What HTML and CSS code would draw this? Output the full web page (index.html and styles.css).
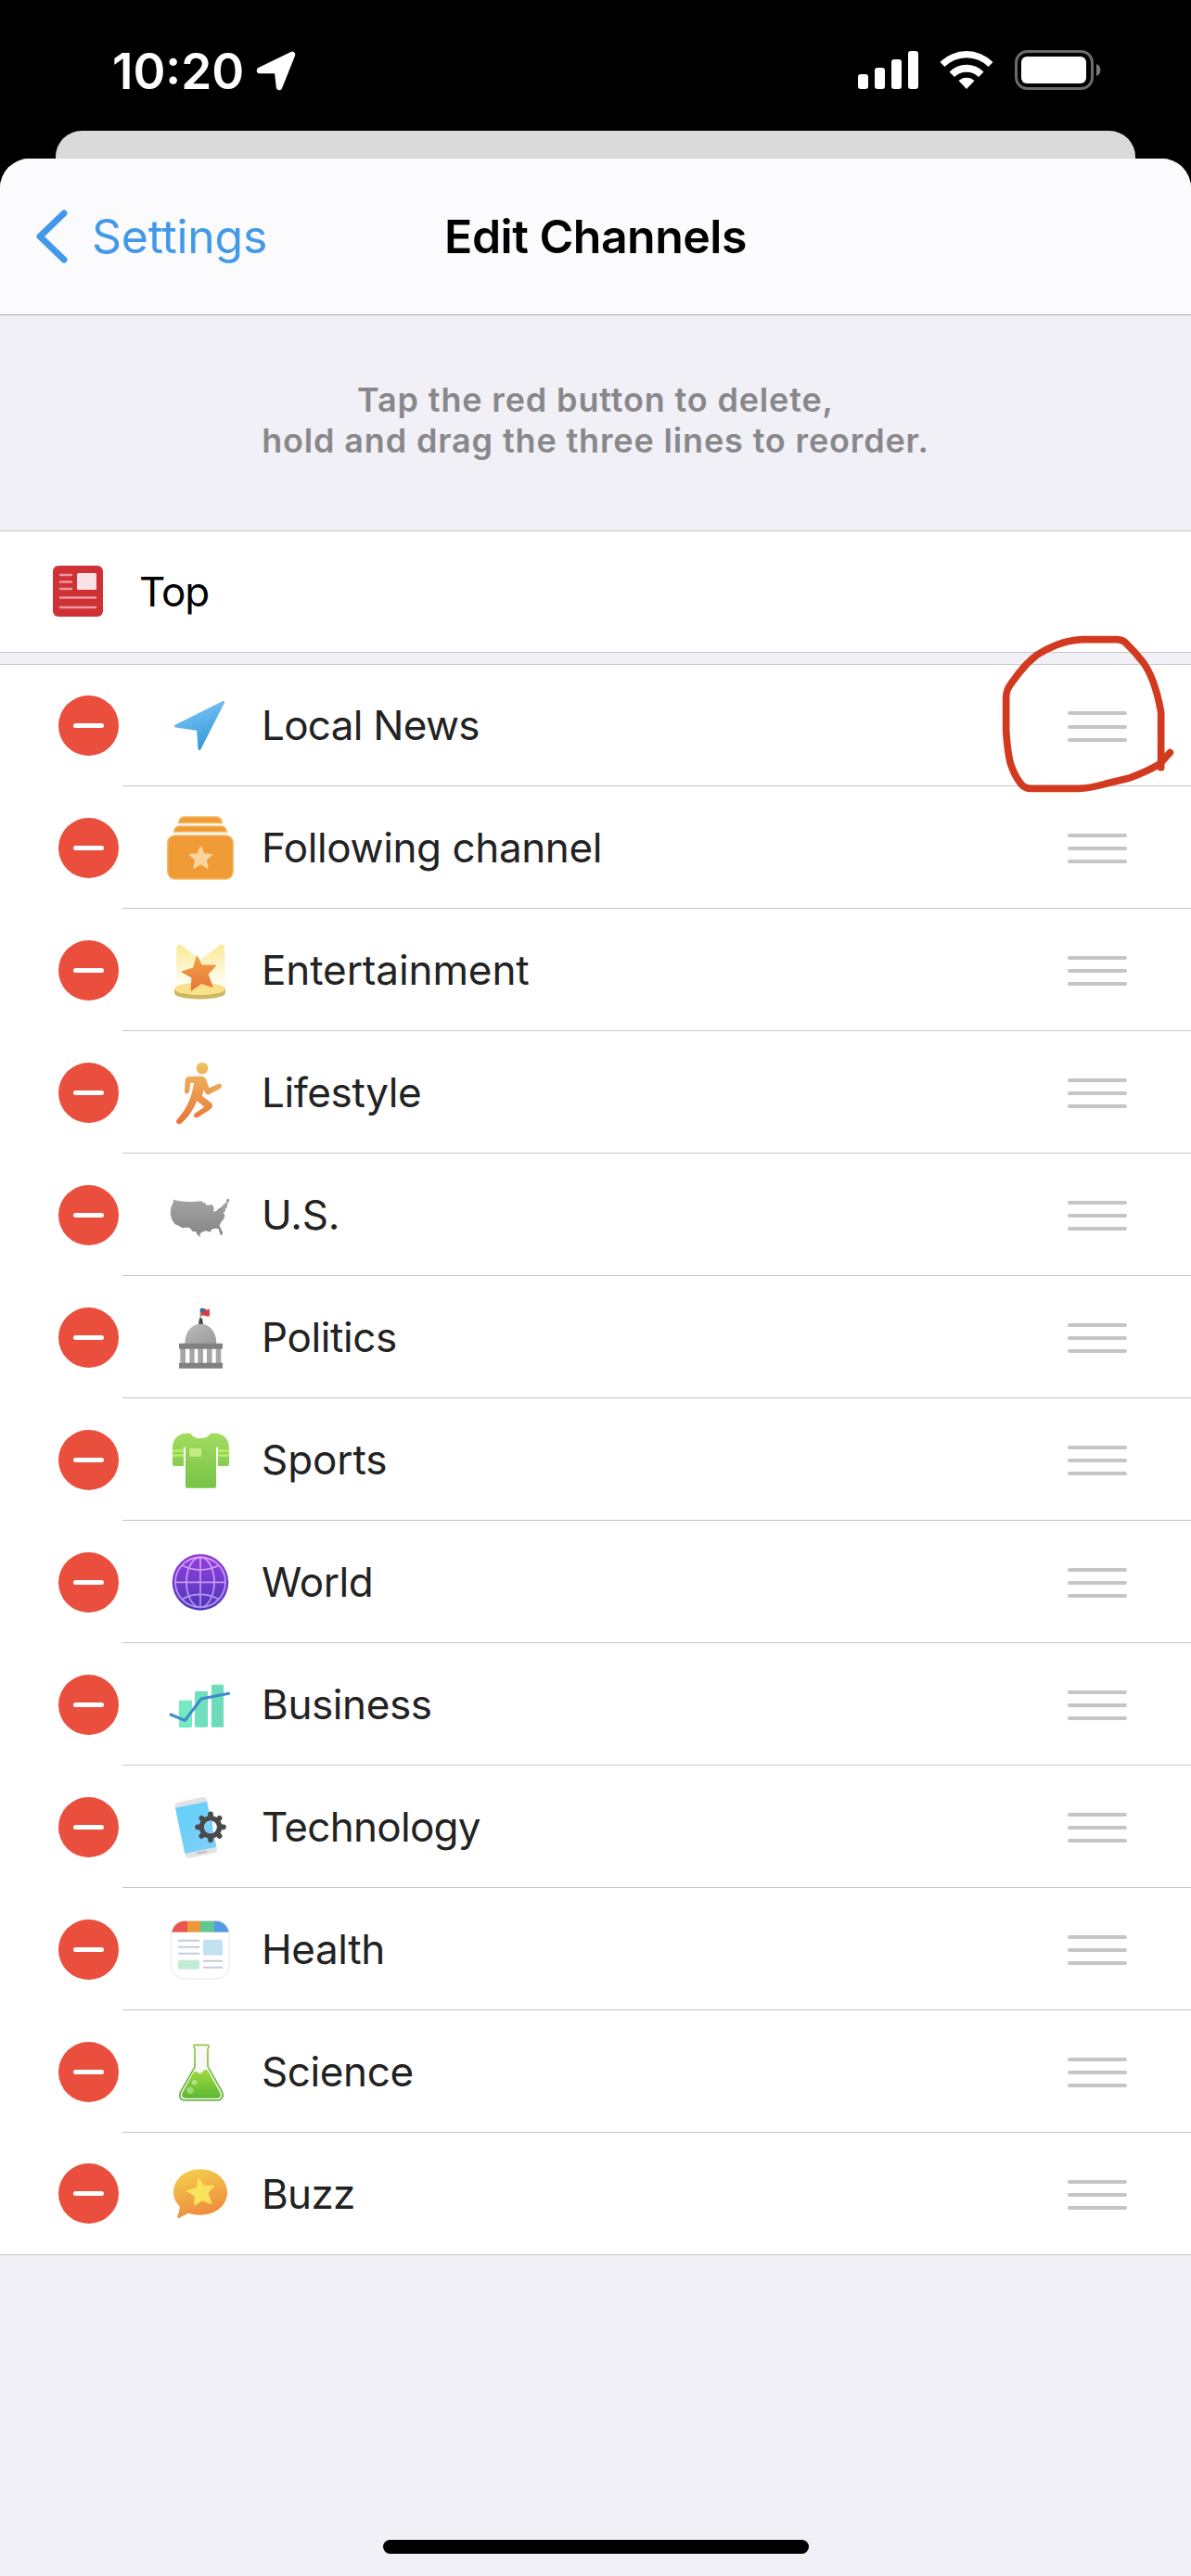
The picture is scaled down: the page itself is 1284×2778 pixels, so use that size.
FILE: index.html
```html
<!DOCTYPE html>
<html lang="en">

<head>
    <meta charset="UTF-8">
    <meta name="viewport" content="width=device-width, initial-scale=1.0">
    <title>Edit Channels</title>
    <link rel="stylesheet" href="styles.css">
</head>

<body>
    <div class="status-bar">
        <span class="time">10:20</span>
        <svg class="location" width="44" height="44" viewBox="0 0 44 44">
            <path d="M4 21 L39 4 L25 39 L23 21 Z" fill="#fff" stroke="#fff" stroke-width="6.500" stroke-linejoin="round" />
        </svg>
        <div class="status-icons">
            <svg width="65" height="42" viewBox="0 0 65 42" fill="#fff">
                <rect x="0" y="26" width="11" height="16" rx="3" />
                <rect x="18" y="19" width="11" height="23" rx="3" />
                <rect x="36" y="10" width="11" height="32" rx="3" />
                <rect x="54" y="1" width="11" height="41" rx="3" />
            </svg>
            <svg width="58" height="42" viewBox="0 0 58 42" fill="#fff">
                <path d="M0.500 13 A40 40 0 0 1 57.500 13 L52.500 18 A33 33 0 0 0 5.500 18 Z" />
                <path d="M10.500 23.500 A26 26 0 0 1 47.500 23.500 L42 29 A19 19 0 0 0 16 29 Z" />
                <path d="M20.500 33 A12.500 12.500 0 0 1 37.500 33 L29 42 Z" />
            </svg>
            <svg width="95" height="44" viewBox="0 0 95 44">
                <rect x="1.500" y="1.500" width="82" height="40" rx="12" fill="none" stroke="#6b6b6b" stroke-width="3" />
                <rect x="7" y="7" width="70" height="29" rx="6" fill="#fff" />
                <path d="M88 15 A7 7 0 0 1 88 28 Z" fill="#7a7a7a" />
            </svg>
        </div>
    </div>

    <div class="back-sheet"></div>

    <div class="sheet">
        <div class="navbar">
            <div class="back">
                <svg width="34" height="58" viewBox="0 0 34 58">
                    <path d="M30 4 L4 29 L30 54" fill="none" stroke="#4299e8" stroke-width="7" stroke-linecap="round" stroke-linejoin="round" />
                </svg>
                <span>Settings</span>
            </div>
            <div class="title">Edit Channels</div>
        </div>

        <div class="hint">
            <div>Tap the red button to delete,</div>
            <div>hold and drag the three lines to reorder.</div>
        </div>

        <div class="top-row">
            <svg class="top-icon" width="54" height="55" viewBox="0 0 54 55">
                <rect width="54" height="55" rx="6" fill="#d03134" />
                <rect x="26" y="8" width="21" height="18" rx="1.500" fill="#f7e2e5" />
                <g stroke="#eb9ba2" stroke-width="2.400" stroke-linecap="round">
                    <path d="M8 10 H20 M8 17.500 H20 M8 25 H20 M8 34.500 H46 M8 45 H46" />
                </g>
            </svg>
            <span>Top</span>
        </div>

        <div class="list">
            <div class="row">
                <div class="minus"></div>
                <div class="row-body">
                    <svg class="icon" viewBox="0 0 72 72">
                        <linearGradient id="local" x1="0" y1="0" x2="0.400" y2="1">
                            <stop offset="0" stop-color="#83cbfa" />
                            <stop offset="1" stop-color="#399bdb" />
                        </linearGradient>
                        <path d="M60.500 11.500 L9.500 37 L33.500 40.500 L35 61.500 Z" fill="url(#local)" stroke="url(#local)" stroke-width="3" stroke-linejoin="round" />
                    </svg>
                    <span class="name tight">Local News</span>
                    <div class="handle"><i></i><i></i><i></i></div>
                </div>
            </div>

            <div class="row">
                <div class="minus"></div>
                <div class="row-body">
                    <svg class="icon" viewBox="0 0 72 72">
                        <g fill="#f19b37" stroke="#f5b862" stroke-width="1.500">
                            <path d="M12.500 9.500 Q14 3 18 3 H54 Q58 3 59.500 9.500 Z" />
                            <path d="M7.500 19 Q9 13 13 13 H59 Q63 13 64.500 19 Z" />
                            <rect x="0.800" y="23" width="70.400" height="47" rx="8" />
                        </g>
                        <path d="M36.500 35 L39.800 43 L48.500 43.700 L41.900 49.300 L44 58 L36.500 53.300 L29 58 L31.100 49.300 L24.500 43.700 L33.200 43 Z" fill="#f9d59c" stroke="#f9d59c" stroke-width="1.500" stroke-linejoin="round" />
                    </svg>
                    <span class="name">Following channel</span>
                    <div class="handle"><i></i><i></i><i></i></div>
                </div>
            </div>

            <div class="row">
                <div class="minus"></div>
                <div class="row-body">
                    <svg class="icon" viewBox="90 148 216 216">
                        <linearGradient id="beam" x1="0" y1="0" x2="0" y2="1">
                            <stop offset="0" stop-color="#fae996" />
                            <stop offset="1" stop-color="#fffef4" />
                        </linearGradient>
                        <linearGradient id="star" x1="0" y1="0" x2="0" y2="1">
                            <stop offset="0" stop-color="#f0a045" />
                            <stop offset="1" stop-color="#e8783a" />
                        </linearGradient>
                        <path d="M121 182 Q124 170 136 175 L198 222 L262 175 Q274 170 276 182 L279 300 H118 Z" fill="url(#beam)" />
                        <path d="M114 318 V330 C114 357 279 357 279 330 V318 Z" fill="#cdb862" />
                        <ellipse cx="196.500" cy="317" rx="82.500" ry="20" fill="#fae28a" />
                        <path d="M187 213 L202 242 L246 242 L221 269 L236 310 L201 298 L169 321 L172 280 L140 262 L177 250 Z" fill="url(#star)" stroke="url(#star)" stroke-width="5" stroke-linejoin="round" />
                    </svg>
                    <span class="name loose">Entertainment</span>
                    <div class="handle"><i></i><i></i><i></i></div>
                </div>
            </div>

            <div class="row">
                <div class="minus"></div>
                <div class="row-body">
                    <svg class="icon" viewBox="90 544 216 216">
                        <linearGradient id="run" gradientUnits="userSpaceOnUse" x1="200" y1="555" x2="180" y2="755">
                            <stop offset="0" stop-color="#f0c062" />
                            <stop offset="1" stop-color="#e8743a" />
                        </linearGradient>
                        <circle cx="204" cy="574" r="19" fill="url(#run)" />
                        <path d="M155 602 Q180 598 205 600 Q214 602 217 610 L226 638 L255 625 Q267 622 268 632 Q266 639 258 642 L225 659 Q218 660 215 655 L209 644 L204 664 L233 686 Q240 692 236 700 L232 706 L190 733 Q180 737 177 729 Q176 722 183 718 L211 699 L187 680 C174 710 158 735 135 753 Q126 758 120 749 Q119 741 126 736 C150 710 170 672 177 622 L166 621 L162 650 Q158 659 150 656 Q147 655 147 648 L149 614 Q149 606 155 602 Z" fill="url(#run)" />
                    </svg>
                    <span class="name">Lifestyle</span>
                    <div class="handle"><i></i><i></i><i></i></div>
                </div>
            </div>

            <div class="row">
                <div class="minus"></div>
                <div class="row-body">
                    <svg class="icon" viewBox="90 160 216 216">
                        <linearGradient id="us" x1="0" y1="0" x2="0" y2="1">
                            <stop offset="0" stop-color="#a4a4a4" />
                            <stop offset="1" stop-color="#858585" />
                        </linearGradient>
                        <path d="M111 219 L122 222 Q160 229 202 224 L206 229 L216 229 L213 234 L222 237 L235 235 L240 240 L242 249 L240 258 L249 256 L258 247 L267 243 L275 232 L282 229 L282 218 L289 216 L293 223 L286 231 L284 244 L278 250 L279 256 L272 261 L277 268 L275 280 L265 292 L260 302 L264 313 L270 325 L268 335 L262 331 L257 314 L245 312 L234 316 L230 324 L215 320 L202 325 L196 330 L198 339 L190 335 L183 322 L174 323 L163 310 L152 309 L140 311 L123 301 L116 299 L106 284 L101 264 L103 244 L110 229 Z" fill="url(#us)" />
                    </svg>
                    <span class="name loose">U.S.</span>
                    <div class="handle"><i></i><i></i><i></i></div>
                </div>
            </div>

            <div class="row">
                <div class="minus"></div>
                <div class="row-body">
                    <svg class="icon" viewBox="90 556 216 216">
                        <linearGradient id="dome" x1="0" y1="0" x2="1" y2="1">
                            <stop offset="0" stop-color="#bcbcbc" />
                            <stop offset="1" stop-color="#9a9a9a" />
                        </linearGradient>
                        <rect x="197" y="572" width="3" height="34" fill="#777" />
                        <path d="M200 572 Q208 568 214 573 T228 573 V595 Q221 598 214 595 T200 595 Z" fill="#dc3b48" />
                        <path d="M198 572 Q205 568 211 572 V583 H198 Z" fill="#2f6fb0" />
                        <path d="M195 603 H204 L207 622 H192 Z" fill="#444" />
                        <path d="M148 685 C148 600 250 600 250 685 Z" fill="url(#dome)" />
                        <path d="M133 700 H150 V750 H133 Z M163 700 H179 V750 H163 Z M190 700 H207 V750 H190 Z M219 700 H236 V750 H219 Z M248 700 H265 V750 H248 Z" fill="#a6a6a6" />
                        <rect x="129" y="684" width="141" height="18" rx="2" fill="#808080" />
                        <rect x="129" y="747" width="141" height="18" rx="2" fill="#808080" />
                    </svg>
                    <span class="name">Politics</span>
                    <div class="handle"><i></i><i></i><i></i></div>
                </div>
            </div>

            <div class="row">
                <div class="minus"></div>
                <div class="row-body">
                    <svg class="icon" viewBox="90 172 216 216">
                        <linearGradient id="shirt" x1="0" y1="0" x2="0" y2="1">
                            <stop offset="0" stop-color="#a3dc60" />
                            <stop offset="1" stop-color="#75c446" />
                        </linearGradient>
                        <path d="M167 195 Q174 211 198 211 Q222 211 231 195 H245 C272 195 291 213 291 243 V295 Q291 300 286 301 H255 V242 Q252 237 249 242 V367 Q249 372 244 372 H155 Q150 372 150 367 V242 Q147 237 144 242 V301 H113 Q108 300 108 295 V243 C108 213 126 195 154 195 Z" fill="url(#shirt)" />
                        <path d="M108 248 H144 V255 H108 Z M108 263 H144 V270 H108 Z M255 248 H291 V255 H255 Z M255 263 H291 V270 H255 Z" fill="#b9ee6c" />
                        <rect x="163" y="243" width="38" height="27" rx="3" fill="#c5ec86" />
                    </svg>
                    <span class="name loose">Sports</span>
                    <div class="handle"><i></i><i></i><i></i></div>
                </div>
            </div>

            <div class="row">
                <div class="minus"></div>
                <div class="row-body">
                    <svg class="icon" viewBox="90 568 216 216">
                        <linearGradient id="globe" x1="0" y1="0" x2="0" y2="1">
                            <stop offset="0" stop-color="#963ee0" />
                            <stop offset="1" stop-color="#4839b8" />
                        </linearGradient>
                        <linearGradient id="grid" gradientUnits="userSpaceOnUse" x1="0" y1="590" x2="0" y2="764">
                            <stop offset="0" stop-color="#dda4f3" />
                            <stop offset="1" stop-color="#b38ff3" />
                        </linearGradient>
                        <circle cx="198" cy="677" r="91" fill="url(#globe)" />
                        <g fill="none" stroke="url(#grid)" stroke-width="5">
                            <circle cx="198" cy="677" r="81" />
                            <ellipse cx="198" cy="677" rx="45" ry="81" />
                            <path d="M198 596 L198.100 758 M117 677 L279 677.100 M138 622 Q198 652 258 622 M138 732 Q198 700 258 732" />
                        </g>
                    </svg>
                    <span class="name">World</span>
                    <div class="handle"><i></i><i></i><i></i></div>
                </div>
            </div>

            <div class="row">
                <div class="minus"></div>
                <div class="row-body">
                    <svg class="icon" viewBox="90 184 216 216">
                        <rect x="129" y="279" width="42" height="88" rx="4" fill="#75e8c4" />
                        <rect x="180" y="249" width="42" height="117" rx="4" fill="#70e0be" />
                        <rect x="234" y="228" width="39" height="138" rx="2" fill="#6cdcb9" />
                        <path d="M102 325 L148 344 L201 274 L290 257" fill="none" stroke="#3c8bc9" stroke-width="9" stroke-linecap="round" stroke-linejoin="round" />
                    </svg>
                    <span class="name">Business</span>
                    <div class="handle"><i></i><i></i><i></i></div>
                </div>
            </div>

            <div class="row">
                <div class="minus"></div>
                <div class="row-body">
                    <svg class="icon" viewBox="90 580 216 216">
                        <linearGradient id="phone" x1="0" y1="0" x2="1" y2="1">
                            <stop offset="0" stop-color="#61d0fc" />
                            <stop offset="1" stop-color="#82cff8" />
                        </linearGradient>
                        <path d="M117 627 L116 617 Q118 611 125 609 L208 591 Q216 592 219 600 L252 762 Q252 769 245 772 L162 789 Q151 789 149 780 Z" fill="#e2e2e2" />
                        <path d="M117 627 L219 606 L250 753 L148 775 Z" fill="url(#phone)" />
                        <path d="M190 773 L217 768" stroke="#bdbdbd" stroke-width="6" stroke-linecap="round" />
                        <!-- gear -->
                        <g stroke="#4a4a4a" stroke-width="17" stroke-linecap="round">
                            <path d="M231 647 V731 M189 689 H273 M202 660 L260 718 M260 660 L202 718" />
                        </g>
                        <circle cx="231" cy="689" r="37" fill="#4a4a4a" />
                        <circle cx="231" cy="689" r="20.500" fill="#fff" />
                        <path d="M236.500 669.500 A20.500 20.500 0 1 0 239.500 707.500 Z" fill="#7acff9" />
                    </svg>
                    <span class="name tight">Technology</span>
                    <div class="handle"><i></i><i></i><i></i></div>
                </div>
            </div>

            <div class="row">
                <div class="minus"></div>
                <div class="row-body">
                    <svg class="icon" viewBox="90 196 216 216">
                        <clipPath id="card">
                            <rect x="106" y="213" width="184" height="186" rx="42" />
                        </clipPath>
                        <rect x="104.500" y="212" width="187" height="188" rx="42" fill="#fff" stroke="#e6e6e6" stroke-width="3" />
                        <g clip-path="url(#card)">
                            <rect x="105" y="212" width="51" height="37" fill="#ea5552" />
                            <rect x="156" y="212" width="42" height="37" fill="#ec9838" />
                            <rect x="198" y="212" width="43" height="37" fill="#5dc991" />
                            <rect x="241" y="212" width="50" height="37" fill="#5499e3" />
                        </g>
                        <path d="M126 276 H195 M126 297 H195 M126 318 H195 M207 342 H270 M207 363 H270" stroke="#c0cdd8" stroke-width="6" />
                        <rect x="207" y="273" width="63" height="51" rx="4" fill="#c2e2f2" />
                        <rect x="126" y="339" width="69" height="30" rx="5" fill="#c3ecd7" />
                    </svg>
                    <span class="name">Health</span>
                    <div class="handle"><i></i><i></i><i></i></div>
                </div>
            </div>

            <div class="row">
                <div class="minus"></div>
                <div class="row-body">
                    <svg class="icon" viewBox="90 592 216 216">
                        <linearGradient id="flask" x1="0" y1="0" x2="0" y2="1">
                            <stop offset="0" stop-color="#a0da40" />
                            <stop offset="1" stop-color="#5cb832" />
                        </linearGradient>
                        <linearGradient id="glass" x1="0" y1="0" x2="0" y2="1">
                            <stop offset="0" stop-color="#92c94e" />
                            <stop offset="1" stop-color="#5eab35" />
                        </linearGradient>
                        <path d="M180 626 Q176 624 177 615 Q177 614 181 614 H221 Q226 614 226 617 Q226 624 222 626 V683 L268 765 Q276 786 258 793 H146 Q127 791 133 768 L180 685 Z" fill="#f7f8f7" stroke="url(#glass)" stroke-width="5" stroke-linejoin="round" />
                        <path d="M174 706 Q182 694 190 703 Q197 710 204 702 Q214 688 223 698 L262 769 Q267 783 255 786 H148 Q135 784 140 769 Z" fill="url(#flask)" />
                        <circle cx="179" cy="735" r="8" fill="#b8e489" />
                        <circle cx="165" cy="761" r="11" fill="#a0d87a" />
                    </svg>
                    <span class="name">Science</span>
                    <div class="handle"><i></i><i></i><i></i></div>
                </div>
            </div>

            <div class="row">
                <div class="minus"></div>
                <div class="row-body">
                    <svg class="icon" viewBox="90 328 216 216">
                        <linearGradient id="bubble" x1="0.300" y1="0" x2="0.600" y2="1">
                            <stop offset="0" stop-color="#f4cd4b" />
                            <stop offset="1" stop-color="#ee873f" />
                        </linearGradient>
                        <path d="M198 356 C248 356 285 389 285 431 C285 473 248 504 198 504 Q177 504 159 498 L128 514 Q122 516 124 510 L132 478 Q111 457 111 431 C111 389 148 356 198 356 Z" fill="url(#bubble)" />
                        <path d="M193 386 L207 410 L241 410 L221 432 L233 467 L204 455 L180 472 L181 442 L155 426 L186 418 Z" fill="#fbe45c" stroke="#fbe45c" stroke-width="4" stroke-linejoin="round" />
                    </svg>
                    <span class="name tight">Buzz</span>
                    <div class="handle"><i></i><i></i><i></i></div>
                </div>
            </div>

            <!-- hand drawn circle over the first handle -->
            <svg class="scribble" width="244" height="300" viewBox="0 0 732 900">
                <path d="M635 503 V325 Q616 215 575 160 Q550 128 520 99 Q510 90 493 89 H380 Q335 92 298 106 Q262 120 232 140 Q200 165 176 197 L150 232 Q134 254 134 275 V385 Q138 450 148 490 Q162 532 183 557 Q195 571 215 571 H370 Q400 571 455 556 L530 538 Q585 518 622 497 Q635 490 644 477 L664 455" />
            </svg>
        </div>

        <div class="home-bar"></div>
    </div>
</body>

</html>
```
FILE: styles.css
```css
body {
    margin: 0;
    padding: 0;
    width: 1284px;
    height: 2778px;
    overflow: hidden;
    background-color: #000;
    font-family: Inter, "Liberation Sans", sans-serif;
    display: flex;
    flex-direction: column;
}

.status-bar {
    height: 141px;
    flex-shrink: 0;
    display: flex;
    align-items: flex-start;
    box-sizing: border-box;
    padding: 54px 95px 0 121px;
}

.time {
    width: 155px;
    line-height: 46px;
    color: #fff;
    font-size: 53px;
    font-weight: 600;
    white-space: nowrap;
}

.location {
    margin-top: 1px;
}

.status-icons {
    margin-left: auto;
    display: flex;
    gap: 23px;
}

.back-sheet {
    height: 30px;
    flex-shrink: 0;
    margin: 0 60px;
    border-radius: 28px 28px 0 0;
    background-color: #dadada;
}

.sheet {
    flex: 1;
    display: flex;
    flex-direction: column;
    border-radius: 32px 32px 0 0;
    background-color: #f1f0f6;
    overflow: hidden;
}

.navbar {
    height: 169px;
    flex-shrink: 0;
    box-sizing: border-box;
    display: grid;
    grid-template-columns: 1fr auto 1fr;
    align-items: center;
    padding: 0 39px;
    background-color: #fbfbfd;
    border-bottom: 1px solid #a9a9ae;
}

.back {
    display: flex;
    align-items: center;
    gap: 26px;
    color: #4299e8;
    font-size: 50px;
    letter-spacing: -0.3px;
}

.title {
    font-size: 50px;
    font-weight: 600;
    letter-spacing: -0.5px;
}

.hint {
    height: 232px;
    flex-shrink: 0;
    box-sizing: border-box;
    padding-top: 69px;
    text-align: center;
    color: #88888b;
    font-size: 36px;
    font-weight: 600;
    line-height: 44px;
    letter-spacing: 0.85px;
}

.top-row {
    height: 132px;
    flex-shrink: 0;
    box-sizing: border-box;
    display: flex;
    align-items: center;
    gap: 39px;
    padding-left: 57px;
    background-color: #fff;
    border-top: 1px solid #c6c6c8;
    border-bottom: 1px solid #c6c6c8;
    font-size: 44px;
    letter-spacing: -1px;
}

.top-icon {
    margin-bottom: 2px;
}

.list {
    position: relative;
    margin-top: 12px;
    background-color: #fff;
    border-top: 1px solid #c6c6c8;
    border-bottom: 1px solid #c6c6c8;
}

.row {
    height: 132px;
    display: flex;
    align-items: center;
    padding-left: 63px;
}

.row:first-child {
    height: 131px;
}

.minus {
    width: 65px;
    height: 65px;
    border-radius: 50%;
    background-color: #ea4e3d;
    display: flex;
    align-items: center;
    justify-content: center;
}

.minus::before {
    content: "";
    width: 33px;
    height: 5px;
    border-radius: 3px;
    background-color: #fff;
}

.row-body {
    flex: 1;
    height: 100%;
    box-sizing: border-box;
    margin-left: 4px;
    padding: 0 69px 0 48px;
    display: flex;
    align-items: center;
    border-bottom: 1px solid #c6c6c8;
}

.row:nth-child(13) {
    height: 131px;
}

.row:nth-child(13) .row-body {
    border-bottom: none;
}

.icon {
    width: 72px;
    height: 72px;
    overflow: visible;
}

.name {
    margin-left: 30px;
    color: #222;
    font-size: 44px;
    letter-spacing: -0.4px;
}

.tight {
    letter-spacing: -0.7px;
}

.loose {
    letter-spacing: -0.1px;
}

.handle {
    margin-left: auto;
    padding-top: 3px;
    width: 64px;
    display: flex;
    flex-direction: column;
    gap: 10.400px;
}

.handle i {
    height: 4px;
    border-radius: 2px;
    background-color: #c5c5c7;
}

.scribble {
    position: absolute;
    left: 1040px;
    top: -57px;
    fill: none;
    stroke: #d23a20;
    stroke-width: 23;
    stroke-linecap: round;
    stroke-linejoin: round;
}

.home-bar {
    width: 459px;
    height: 15px;
    margin: auto 412px 24px 413px;
    border-radius: 8px;
    background-color: #000;
}
```
